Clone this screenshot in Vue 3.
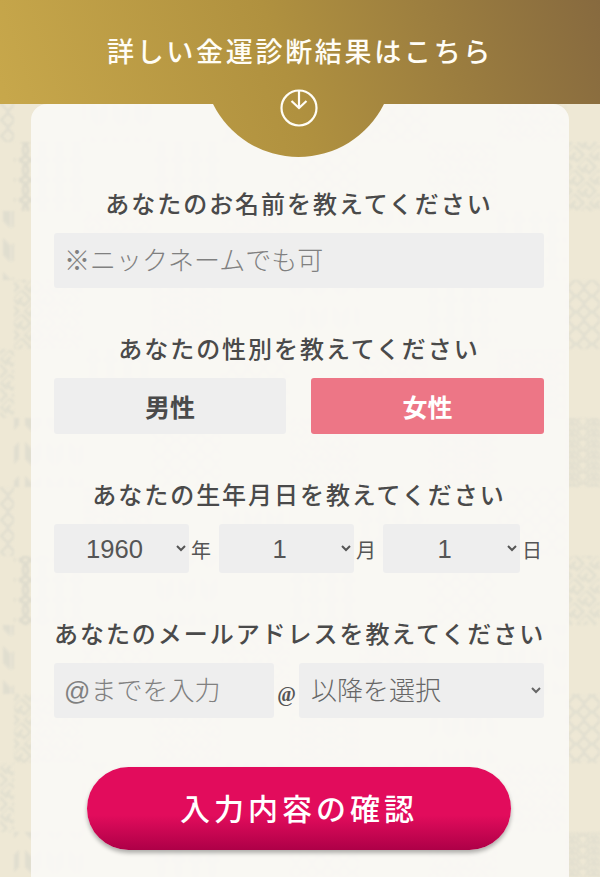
<script setup>
import { ref } from 'vue'

const SIZE = 69
const kinds = ['shippo', 'arrow', 'sayagata', 'knot', 'wave']
const byCol = {
  '-1': ['shippo', 'arrow', 'sayagata'],
  0: ['knot', 'sayagata', 'arrow'],
  8: ['sayagata', 'shippo', 'wave']
}
const tiles = []
for (let col = -1; col <= 8; col++) {
  for (let row = 1; row <= 12; row++) {
    if ((col + row + 20) % 2 !== 0) continue
    const seq = byCol[col]
    const idx = Math.floor(row / 2)
    const kind = seq ? seq[(col === -1 ? (row - 1) / 2 : row / 2 - 1) % 3] : kinds[(idx + col + 5) % 5]
    tiles.push({ id: `${col}-${row}`, x: 14 + col * SIZE, y: 4 + row * SIZE, kind })
  }
}

const name = ref('')
const mail = ref('')
const gender = ref('female')
const years = [1959, 1960, 1961]
const months = Array.from({ length: 12 }, (_, i) => i + 1)
const days = Array.from({ length: 31 }, (_, i) => i + 1)
const year = ref(1960)
const month = ref(1)
const day = ref(1)
const domain = ref('')
</script>

<template>
  <div class="page">
    <svg class="pattern" width="600" height="877" aria-hidden="true">
      <defs>
        <pattern id="wave" width="22" height="11" patternUnits="userSpaceOnUse">
          <g fill="none" stroke="#d9d8cb" stroke-width="1.5">
            <circle cx="0" cy="11" r="10" /><circle cx="0" cy="11" r="6" /><circle cx="22" cy="11" r="10" /><circle cx="22" cy="11" r="6" />
            <circle cx="11" cy="5.5" r="10" /><circle cx="11" cy="5.5" r="6" />
          </g>
        </pattern>
        <pattern id="shippo" width="16" height="16" patternUnits="userSpaceOnUse">
          <g fill="none" stroke="#dad9cd" stroke-width="2.6">
            <path d="M8 1 15 8 8 15 1 8Z" />
          </g>
          <circle cx="8" cy="8" r="1.8" fill="#e9e5d5" />
        </pattern>
        <pattern id="sayagata" width="17" height="17" patternUnits="userSpaceOnUse" patternTransform="rotate(45)">
          <path d="M0 3H12V12H5V7M17 3V17M0 15H8" fill="none" stroke="#d9d9cc" stroke-width="2.4" />
        </pattern>
        <pattern id="knot" width="17" height="20" patternUnits="userSpaceOnUse">
          <path d="M2 0C14 5 14 15 2 20M15 0C3 5 3 15 15 20" fill="none" stroke="#d6d5c9" stroke-width="3" />
        </pattern>
        <pattern id="arrow" width="22" height="34" patternUnits="userSpaceOnUse">
          <path d="M3 0 11 8 19 0V17L11 25 3 17Z" fill="#dad9cd" />
          <path d="M11 8V25" stroke="#e9e5d5" stroke-width="2" />
        </pattern>
      </defs>
      <rect v-for="t in tiles" :key="t.id" :x="t.x" :y="t.y" :width="SIZE" :height="SIZE" :fill="`url(#${t.kind})`" />
    </svg>

    <header class="head">
      <h1 class="title">詳しい金運診断結果はこちら</h1>
    </header>
    <div class="tab"></div>
    <svg class="tab-icon" width="40" height="40" viewBox="0 0 40 40" aria-hidden="true">
      <circle cx="20" cy="20" r="17.5" fill="none" stroke="#fffdf6" stroke-width="2.2" />
      <path d="M20 3V20M12.5 13 20 20 27.5 13" fill="none" stroke="#fffdf6" stroke-width="2.2" />
    </svg>

    <main class="card">
      <section class="block first">
        <h2 class="label">あなたのお名前を教えてください</h2>
        <input v-model="name" class="field" type="text" placeholder="※ニックネームでも可" />
      </section>

      <section class="block">
        <h2 class="label">あなたの性別を教えてください</h2>
        <div class="genders">
          <button type="button" class="gender" :class="{ on: gender === 'male' }" @click="gender = 'male'">男性</button>
          <button type="button" class="gender" :class="{ on: gender === 'female' }" @click="gender = 'female'">女性</button>
        </div>
      </section>

      <section class="block">
        <h2 class="label">あなたの生年月日を教えてください</h2>
        <div class="birth">
          <select v-model="year" class="pick num"><option v-for="y in years" :key="y" :value="y">{{ y }}</option></select>
          <span class="unit">年</span>
          <select v-model="month" class="pick num"><option v-for="m in months" :key="m" :value="m">{{ m }}</option></select>
          <span class="unit">月</span>
          <select v-model="day" class="pick num"><option v-for="d in days" :key="d" :value="d">{{ d }}</option></select>
          <span class="unit">日</span>
        </div>
      </section>

      <section class="block">
        <h2 class="label">あなたのメールアドレスを教えてください</h2>
        <div class="mail">
          <input v-model="mail" class="field short" type="text" placeholder="@までを入力" />
          <span class="at">@</span>
          <select v-model="domain" class="pick domain"><option value="">以降を選択</option></select>
        </div>
      </section>

      <button type="button" class="submit">入力内容の確認</button>
    </main>
  </div>
</template>

<style scoped>
.page {
  position: relative;
  width: 600px;
  height: 877px;
  overflow: hidden;
  display: flex;
  flex-direction: column;
  background: #eee8d5;
  font-family: "Liberation Serif", "Noto Sans CJK JP", serif;
  color: #444;
}
.pattern {
  position: absolute;
  inset: 0;
  opacity: 0.65;
  filter: blur(1px);
}
.head,
.tab {
  background-image: linear-gradient(72deg, #c9a94c 0%, #b0913f 48%, #876a3f 100%);
  background-size: 600px 160px;
  background-repeat: no-repeat;
}
.head {
  position: relative;
  height: 104px;
  flex: none;
  display: flex;
  justify-content: center;
}
.title {
  margin: 34px 0 0;
  font-size: 27px;
  line-height: 38px;
  font-weight: 500;
  letter-spacing: 2.7px;
  color: #fffdf6;
  white-space: nowrap;
}
.tab {
  position: absolute;
  z-index: 2;
  top: 0;
  left: 0;
  width: 600px;
  height: 160px;
  clip-path: path("M213 104 A95.5 95.5 0 0 0 384 104 Z");
}
.tab-icon {
  position: absolute;
  z-index: 3;
  left: 279px;
  top: 88px;
}
.card {
  position: relative;
  flex: 1;
  margin: 0 31px;
  padding: 0 25px 0 23px;
  background: rgba(250, 249, 245, 0.93);
  border-radius: 16px 16px 0 0;
}
.block {
  margin-top: 43px;
}
.block.first {
  margin-top: 82px;
}
.label {
  margin: 0 0 11px;
  height: 36px;
  font-size: 24px;
  line-height: 38px;
  font-weight: 500;
  letter-spacing: 1.95px;
  text-align: center;
  white-space: nowrap;
  color: #4a4a4a;
}
.field,
.pick {
  display: block;
  box-sizing: border-box;
  width: 100%;
  border: none;
  outline: none;
  border-radius: 3px;
  background-color: #eeeeee;
  font-family: "Liberation Sans", "Noto Sans CJK JP", sans-serif;
  font-size: 26px;
  color: #555;
}
.field {
  height: 55px;
  padding: 1px 10px 0;
}
.field::placeholder {
  color: #808080;
  font-weight: 300;
  opacity: 1;
}
.genders {
  display: grid;
  grid-template-columns: 232px 233px;
  gap: 25px;
}
.gender {
  height: 56px;
  border: none;
  border-radius: 3px;
  background: #eeeeee;
  color: #4a4a4a;
  font-family: "Liberation Serif", "Noto Sans CJK JP", serif;
  font-size: 25px;
  font-weight: 700;
}
.gender.on {
  background: #ed7686;
  color: #fff;
}
.birth {
  display: grid;
  grid-template-columns: 135px 30px 135px 29px 137px 24px;
  height: 49px;
}
.pick.num {
  height: 49px;
  text-align-last: center;
  padding: 0 2px 0 0;
  font-size: 25.6px;
}
.unit {
  padding: 4px 0 0 2px;
  line-height: 47px;
  font-size: 20px;
  color: #555;
}
.mail {
  display: grid;
  grid-template-columns: 220px 25px 245px;
  height: 55px;
}
.at {
  text-align: center;
  font-size: 20px;
  font-weight: 700;
  line-height: 62px;
  color: #555;
}
.pick.domain {
  height: 55px;
  padding: 0 8px;
  color: #666;
  font-weight: 300;
}
.submit {
  display: block;
  width: 424px;
  height: 83px;
  margin: 49px 0 0 33px;
  padding: 0 0 4px;
  border: none;
  border-radius: 42px;
  background: linear-gradient(180deg, #e20c5c 0%, #e20c5c 58%, #ad0047 100%);
  box-shadow: 0 3px 4px rgba(0, 0, 0, 0.3);
  color: #fff;
  font-family: "Liberation Serif", "Noto Sans CJK JP", serif;
  font-size: 30px;
  font-weight: 500;
  letter-spacing: 4px;
}
</style>
